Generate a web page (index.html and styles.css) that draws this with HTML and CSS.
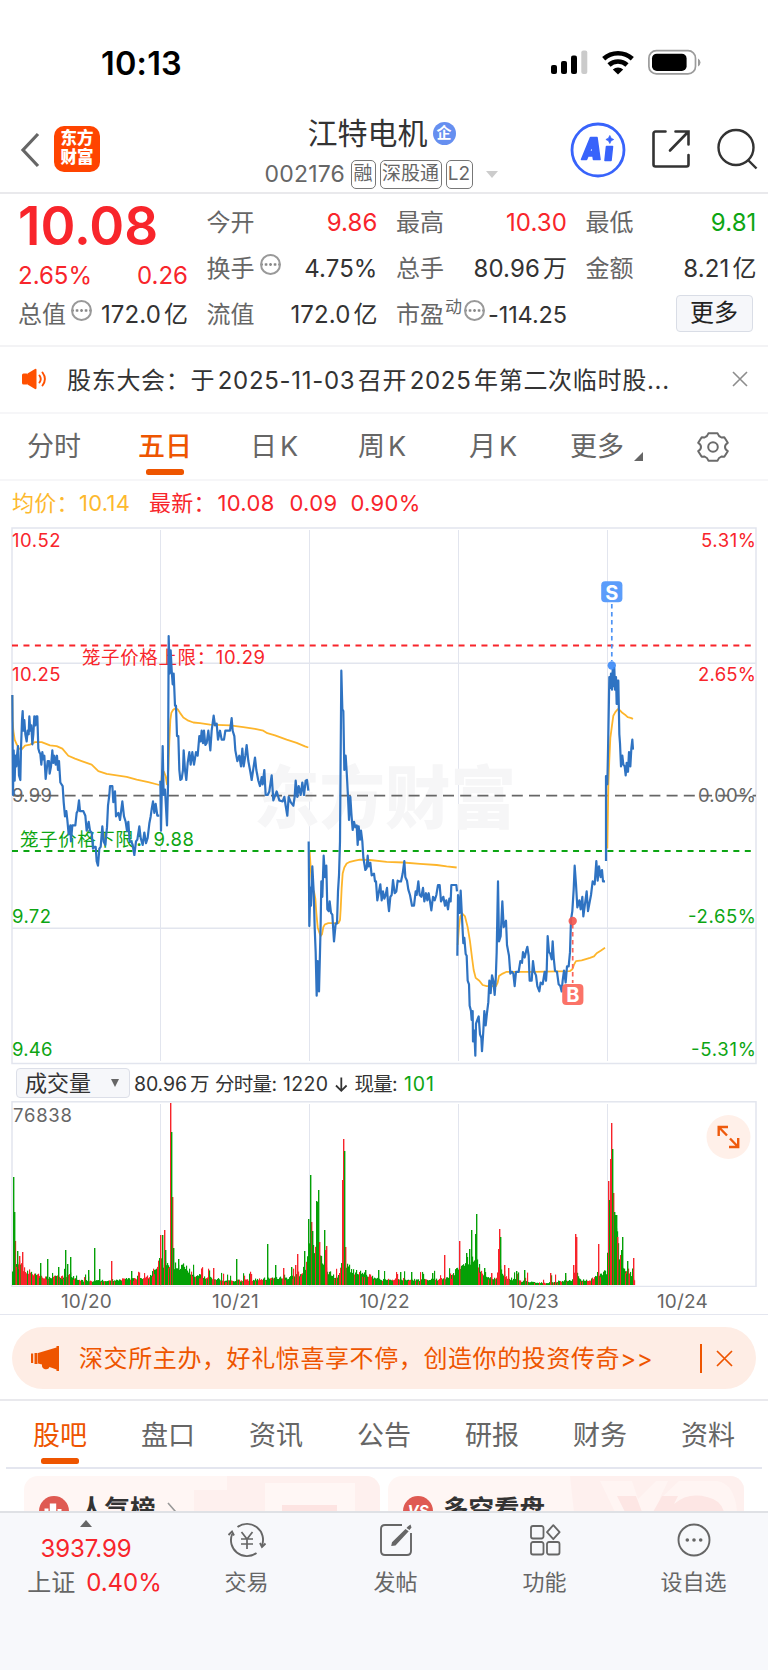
FILE: index.html
```html
<!DOCTYPE html>
<html lang="zh-CN">
<head>
<meta charset="utf-8">
<title>江特电机 002176</title>
<link rel="stylesheet" href="styles.css">
</head>
<body>
<div class="app">
  <div class="status">
    <span class="time">10:13</span>
    <svg class="status-icons" width="152" height="30" viewBox="550 48 152 30">
      <rect x="551" y="65" width="6" height="9" rx="2"/>
      <rect x="561" y="61" width="6" height="13" rx="2"/>
      <rect x="571" y="55.5" width="6" height="18.500" rx="2"/>
      <rect x="581.300" y="50.500" width="6" height="23.500" rx="2" fill="#cbcbcb"/>
      <g fill="none" stroke="#000" stroke-width="4.600">
        <path d="M603.700 58.800a21 21 0 0 1 28.600 0"/>
        <path d="M609 65a13.300 13.300 0 0 1 18 0"/>
      </g>
      <path d="M612.800 69.400a7.800 7.800 0 0 1 10.400 0L618 74.500z"/>
      <rect x="648.900" y="50.700" width="46.600" height="23.200" rx="7.500" fill="none" stroke="#9b9b9b" stroke-width="1.700"/>
      <rect x="652" y="53.700" width="34.600" height="17.300" rx="4.800"/>
      <path d="M698 58.500q2.500 1.500 2.500 4t-2.500 4z" fill="#9b9b9b"/>
    </svg>
  </div>

  <header class="header">
    <svg class="back" width="22" height="40" viewBox="0 0 22 40"><path d="M19 4 4 20l15 16" fill="none" stroke="#666" stroke-width="3.200"/></svg>
    <div class="logo"><span>东方</span><span>财富</span></div>
    <div class="heading">
      <div class="name">江特电机<span class="badge">企</span></div>
      <div class="sub"><span class="code">002176</span><span class="tag rong">融</span><span class="tag sgt">深股通</span><span class="tag l2">L2</span><i class="caret"></i></div>
    </div>
    <svg class="ai" width="56" height="56" viewBox="0 0 56 56">
      <circle cx="28" cy="28" r="26" fill="none" stroke="#3863fb" stroke-width="2.800"/>
      <g fill="#3863fb" fill-rule="evenodd" stroke="#3863fb" stroke-width="1.600" stroke-linejoin="round">
        <path d="M11.500 37.500 20.500 15.500H27L30 37.500H23.500L23 34H18L16.500 37.500zM19.500 29.500H22.700L22.300 23z"/>
        <path d="M36.500 24.500h6L41 38.500h-6z"/><path stroke-width=".8" d="m39.800 13.500 1.300 2.700 2.600 1.300-2.600 1.300-1.300 2.700-1.300-2.700-2.600-1.300 2.600-1.300z"/>
      </g>
    </svg>
    <svg class="share" width="40" height="40" viewBox="0 0 40 40"><g fill="none" stroke="#333" stroke-width="2.600" stroke-linecap="round"><path d="M14.500 2.500H4.500a2 2 0 0 0-2 2v31a2 2 0 0 0 2 2h31a2 2 0 0 0 2-2V26"/><path d="M24.500 2.500h13v13M37 3 19 21.500"/></g></svg>
    <svg class="search" width="42" height="42" viewBox="0 0 42 42"><g fill="none" stroke="#333" stroke-width="2.400"><circle cx="20" cy="19.500" r="17.500"/><path d="M32 32 40.500 40.500"/></g></svg>
  </header>

  <section class="quote">
    <div class="col first">
      <div class="price">10.08</div>
      <div class="row chg red"><span>2.65%</span><span>0.26</span></div>
      <div class="row"><span class="lab">总值<i class="more-dot"></i></span><span class="val">172.0<b>亿</b></span></div>
    </div>
    <div class="col">
      <div class="row"><span class="lab">今开</span><span class="val red">9.86</span></div>
      <div class="row"><span class="lab">换手<i class="more-dot"></i></span><span class="val">4.75%</span></div>
      <div class="row"><span class="lab">流值</span><span class="val">172.0<b>亿</b></span></div>
    </div>
    <div class="col">
      <div class="row"><span class="lab">最高</span><span class="val red">10.30</span></div>
      <div class="row"><span class="lab">总手</span><span class="val">80.96<b>万</b></span></div>
      <div class="row pe"><span class="lab">市盈<sup>动</sup><i class="more-dot"></i></span><span class="val">-114.25</span></div>
    </div>
    <div class="col">
      <div class="row"><span class="lab">最低</span><span class="val green">9.81</span></div>
      <div class="row"><span class="lab">金额</span><span class="val">8.21<b>亿</b></span></div>
      <div class="row end"><button class="more">更多</button></div>
    </div>
  </section>

  <div class="notice">
    <svg width="26" height="24" viewBox="0 0 26 24"><g fill="#ff5000"><rect x="0" y="6.500" width="6" height="11" rx="1.500"/><path d="M5.500 6.500 13 2q1.500-.6 1.500 1v18q0 1.600-1.500 1l-7.500-4.500z"/></g><g fill="none" stroke="#ff5000" stroke-width="1.900" stroke-linecap="round"><path d="M17.500 8.500q2.500 3.500 0 7M20.500 5.500q4.800 6.500 0 13"/></g></svg>
    <span class="notice-text">股东大会：于<em>2025-11-03</em>召开<em>2025</em>年第二次临时股...</span>
    <svg class="close" width="16" height="16" viewBox="0 0 16 16"><path d="m1 1 14 14M15 1 1 15" stroke="#8d8d8d" stroke-width="1.600"/></svg>
  </div>

  <nav class="periods">
    <span>分时</span><span class="on">五日</span><span>日<em>K</em></span><span>周<em>K</em></span><span>月<em>K</em></span><span class="more-tab">更多<i></i></span>
    <svg width="34" height="32" viewBox="-17 -16 34 32"><g fill="none" stroke="#6b6b6b" stroke-width="2"><circle r="4.800"/><path stroke-linejoin="round" d="M-4.500-13.700H4.500Q5.500-10.500 8.300-9.600L11.300-9.800 14.800-4.200Q12-2.500 12 0T14.800 4.200L11.300 9.800 8.300 9.600Q5.500 10.500 4.500 13.700H-4.500Q-5.500 10.500-8.300 9.600L-11.300 9.800-14.800 4.200Q-12 2.500-12 0T-14.800-4.200L-11.300-9.800-8.300-9.600Q-5.500-10.500-4.500-13.700z"/></g></svg>
  </nav>

  <div class="avg"><span class="gold">均价：10.14</span><span class="red latest">最新：</span><span class="red p">10.08</span><span class="red d">0.09</span><span class="red">0.90%</span></div>

  <svg class="chart" width="768" height="540" viewBox="0 526 768 540">
    <g class="grid">
      <path d="M12 663.200H756M12 928.200H756" stroke-width="1.600"/>
      <path d="M160.500 530V1061M309.500 530V1061M458.500 530V1061M607.500 530V1061"/>
      <rect x="12" y="528" width="744" height="535.500" />
    </g>
    <text class="watermark" x="254" y="823" textLength="262" lengthAdjust="spacingAndGlyphs">东方财富</text>
    <path d="M12 795.700H756" stroke="#666" stroke-width="1.800" stroke-dasharray="11 6.200" stroke-dashoffset="-1"/>
    <g class="dash"><path d="M12 645.500H752" stroke="#f8252b"/><path d="M12 851H752" stroke="#0da513"/></g>
    <g class="axis">
      <text class="up" x="12" y="546.600" textLength="48.500">10.52</text>
      <text class="up" x="12" y="681" textLength="48.500">10.25</text>
      <text class="flat" x="12" y="801.800" textLength="40">9.99</text>
      <text class="down" x="12" y="922.800" textLength="39">9.72</text>
      <text class="down" x="12" y="1056.300" textLength="40.500">9.46</text>
      <g text-anchor="end">
        <text class="up" x="756" y="546.600" textLength="55">5.31%</text>
        <text class="up" x="756" y="681" textLength="58">2.65%</text>
        <text class="flat" x="756" y="801.800" textLength="58">0.00%</text>
        <text class="down" x="756" y="922.800" textLength="68">-2.65%</text>
        <text class="down" x="756" y="1056.300" textLength="65">-5.31%</text>
      </g>
      <text class="up" x="82" y="664.300" textLength="183">笼子价格上限：10.29</text>
      <text class="down" x="20" y="846.200" textLength="174">笼子价格下限：9.88</text>
    </g>
    <g class="avg-line">
      <g transform="translate(0 520) scale(.333333 .357143)">
        <polyline points="37,490 38,560 40,590 44,615 50,628 57,640 65,642 75,632 90,629 105,622 125,622 150,631 170,633 187,640 205,660 225,668 245,675 260,680 275,685 295,703 320,711 350,715 380,719 410,727 445,734 478,742"/>
        <polyline points="483,740 487,700 492,705 497,718 501,740 505,700 508,620 511,560 514,540 519,532 526,527 533,530 540,540 550,553 565,562 580,567 600,569 630,573 690,575 730,580 765,585 790,590 802,597 825,603 860,615 890,624 915,634 925,637"/>
      </g>
      <g transform="translate(300 520) scale(.333333 .357143)">
        <polyline points="29,930 34,1000 38,1035 42,1040 46,1060 49,1100 53,1140 58,1155 62,1165 66,1160 70,1140 75,1132 85,1129 115,1129 120,1120 122,1090 125,1030 128,990 133,973 140,962 150,957 165,954 180,951 210,952 260,957 310,959 360,963 410,966 440,970 470,973"/>
        <polyline points="473,1190 477,1140 481,1110 487,1102 495,1110 503,1140 510,1180 516,1225 521,1260 527,1282 538,1290 548,1302 560,1305 588,1305 593,1295 597,1277 608,1270 620,1265 700,1265 810,1263 817,1258 822,1245 828,1235 845,1233 870,1226 882,1222 890,1213 902,1206 915,1198"/>
      </g>
      <g transform="translate(560 520) scale(.333333 .357143)">
        <polyline points="142,920 145,745 148,670 151,610 156,575 160,548 166,538 173,530 180,533 187,540 195,545 203,552 212,554 219,557"/>
      </g>
    </g>
    <g class="price-line">
      <g transform="translate(0 520) scale(.333333 .357143)">
        <polyline points="37,490 39,770 41,645 44,730 46,660 49,690 51,660 54,633 57,715 61,728 63,640 66,560 68,535 70,590 73,560 76,600 80,620 83,590 86,600 88,550 91,590 94,575 97,628 100,600 103,550 106,575 109,550 112,550 115,640 118,650 121,655 124,685 127,650 130,670 133,660 137,725 140,700 143,675 147,675 149,710 153,690 157,645 160,680 163,660 167,685 171,660 174,700 177,675 181,735 188,745 191,790 195,830 199,815 202,840 206,880 211,855 213,900 217,855 226,855 230,820 233,815 237,785 240,815 250,815 256,828 260,870 266,845 270,870 275,875 279,920 283,915 287,915 290,955 294,968 298,920 302,915 307,858 311,900 316,910 321,860 324,800 328,770 330,745 337,745 340,790 345,760 348,830 355,820 360,840 367,788 372,830 377,845 381,870 385,845 389,900 394,900 398,910 403,938 408,900 412,895 418,858 422,890 428,910 433,875 438,905 443,890 448,850 452,830 455,810 459,788 463,820 467,795 472,828 478,828"/>
        <polyline points="481,730 483,870 488,633 491,770 495,755 501,855 504,745 506,325 509,430 512,365 515,420 518,460 521,430 525,520 528,520 531,605 535,605 538,700 541,728 545,725 549,700 551,645 555,700 559,728 563,680 568,650 572,685 577,650 582,685 588,650 593,660 598,605 602,620 605,590 609,625 612,590 616,630 620,625 625,590 631,645 635,590 641,548 645,575 650,570 654,615 660,590 665,615 672,615 676,590 690,590 695,555 698,590 703,605 706,645 712,675 718,660 723,690 727,640 731,690 736,660 740,630 745,675 751,705 755,728 761,690 765,665 769,700 775,730 780,745 785,720 788,740 793,700 797,770 803,770 808,760 815,715 820,785 830,760 838,785 848,788 853,775 857,800 862,828 866,775 872,790 880,800 884,775 887,730 892,775 896,745 902,770 907,735 912,770 917,730 921,728 925,758"/>
      </g>
      <g transform="translate(300 520) scale(.333333 .357143)">
        <polyline points="26,900 28,1137 31,1030 33,1080 37,970 41,1040 44,1140 47,1210 50,1332 53,1235 57,1320 60,1210 62,1130 64,1012 67,1055 71,940 75,1000 79,968 82,1090 86,1095 89,1068 93,1100 97,1105 102,1180 107,1130 111,1130 114,1040 117,995 120,900 124,422 127,530 130,535 133,700 137,660 140,705 144,775 147,840 151,775 154,820 158,868 162,845 166,860 170,855 173,910 176,858 180,895 183,870 187,900 190,945 196,980 200,975 203,940 206,970 211,960 215,995 222,990 225,1012 228,1012 232,1065 236,1045 241,1020 245,1065 249,1040 253,1060 257,1050 261,1030 264,1070 267,1095 271,1055 275,1050 279,1008 284,1045 289,1040 293,1010 297,1012 303,1012 308,990 313,955 316,1000 321,1010 325,1035 330,1050 336,1080 342,1080 347,1040 350,1050 355,1012 359,1050 364,1055 369,1030 373,1068 378,1045 382,1065 386,1045 390,1068 394,1093 399,1055 404,1065 409,1050 414,1022 419,1022 423,1068 430,1055 435,1080 439,1065 444,1090 448,1060 452,1068 454,1022 469,1022 471,1040"/>
        <polyline points="472,1220 474,1050 479,1100 482,1038 485,1095 488,1150 490,1185 493,1170 497,1215 500,1220 503,1290 507,1300 509,1360 513,1375 515,1400 518,1375 519,1460 523,1430 526,1500 528,1410 532,1400 536,1390 540,1440 544,1450 546,1487 550,1430 553,1375 557,1415 561,1380 565,1350 568,1290 572,1325 576,1275 580,1290 584,1330 587,1290 590,1210 594,1012 597,1180 602,1165 607,1068 611,1140 618,1122 621,1190 627,1220 631,1270 636,1265 640,1270 644,1305 648,1265 656,1265 661,1235 666,1240 669,1210 674,1225 679,1205 682,1195 686,1220 689,1290 695,1290 699,1235 703,1265 708,1275 712,1305 718,1320 722,1295 728,1300 734,1265 738,1290 740,1265 743,1165 747,1210 751,1215 755,1230 758,1180 761,1225 765,1262 771,1265 776,1300 781,1305 785,1320 788,1290 792,1262 797,1295 801,1250 806,1250 810,1210 813,1120 817,1095 821,1035 824,968 828,1020 832,1085 838,1065 842,1090 847,1055 850,1110 855,1075 860,1040 864,1095 869,1070 873,1050 878,1012 884,1020 889,955 893,1010 897,970 902,1000 906,980 909,1012 915,1012"/>
      </g>
      <g transform="translate(560 520) scale(.333333 .357143)">
        <polyline points="138,955 138,717 142,740 145,600 148,440 151,470 153,430 156,475 158,420 161,465 163,415 165,475 168,440 170,515 173,515 173,450 175,450 178,600 180,625 183,690 187,660 190,685 194,690 197,715 200,680 204,705 207,650 211,690 214,640 217,615 219,643"/>
      </g>
    </g>
    <g class="mark">
      <path d="M611.800 604V661" stroke="#4e93f4" stroke-width="1.700" stroke-dasharray="4.500 3.500"/>
      <circle cx="611.800" cy="665.500" r="4.200" fill="#2f82f7" opacity=".85"/>
      <rect x="601.200" y="581.300" width="21.200" height="21" rx="4" fill="#5b9dfb"/>
      <text x="611.800" y="599.500">S</text>
      <path d="M572.700 924V983" stroke="#f9655c" stroke-width="1.700" stroke-dasharray="4.500 3.500"/>
      <circle cx="572.700" cy="921" r="4.200" fill="#f4554c" opacity=".9"/>
      <rect x="562.200" y="984" width="21.200" height="21" rx="4" fill="#fb7368"/>
      <text x="572.900" y="1002.200">B</text>
    </g>
  </svg>

  <div class="vol-head">
    <button class="picker">成交量<i></i></button>
    <svg width="310" height="38" viewBox="130 0 310 38"><g class="vol-text"><text x="134" y="25.500" textLength="53">80.96</text><text x="190" y="25.500" textLength="18">万</text><text x="215" y="25.500" textLength="62">分时量:</text><text x="283" y="25.500" textLength="45">1220</text><path d="M341.300 12.500V25M336 20.500l5.300 5.300 5.300-5.300" fill="none" stroke="#333" stroke-width="1.800"/><text x="354.500" y="25.500" textLength="43">现量:</text><text class="down" x="404" y="25.500" textLength="30">101</text></g></svg>
  </div>

  <div class="vol">
    <svg width="768" height="186" viewBox="0 1101 768 186">
      <g class="grid"><path d="M160.500 1104V1286M309.500 1104V1286M458.500 1104V1286M607.500 1104V1286"/><rect x="12" y="1101.800" width="744" height="184.700" stroke-width="1.800"/></g>
      <g id="bars"></g>
      <text class="vol-max" x="13" y="1122" textLength="59">76838</text>
      <circle cx="728.500" cy="1137" r="22" fill="#fff0e9"/>
      <g fill="none" stroke="#ee5a0d" stroke-width="2.400"><path d="M718.700 1136V1127H728M718.700 1127 727 1135.500M738.200 1138V1147H729M738.200 1147 730 1138.500"/></g>
    </svg>
    <div class="dates"><span>10/20</span><span>10/21</span><span>10/22</span><span>10/23</span><span>10/24</span></div>
  </div>

  <div class="promo-wrap"><div class="promo">
    <svg width="30" height="26" viewBox="0 0 30 26"><path fill="#ee5500" d="M1 8.500h2.200v9.500H1zM4.500 8h3v11h-3zM8 8 26.500 2.500V1H29v25h-2.500v-1.500L19.500 22q-1 3-4.500 2.200-3.500-.9-3-4.700L8 18.500z"/></svg>
    <span class="promo-text">深交所主办，好礼惊喜享不停，创造你的投资传奇&gt;&gt;</span>
    <i class="bar"></i>
    <svg class="x" width="17" height="17" viewBox="0 0 17 17"><path d="m1 1 15 15M16 1 1 16" stroke="#ee5500" stroke-width="1.700"/></svg>
  </div></div>

  <nav class="sections"><span class="on">股吧</span><span>盘口</span><span>资讯</span><span>公告</span><span>研报</span><span>财务</span><span>资料</span></nav>

  <div class="cards">
    <div class="card">
      <svg class="deco" width="356" height="36" viewBox="0 0 356 36"><path d="M170 14h33V0h153v36H170z" fill="#fef0ee"/><path d="M241 7h90v29h-90z" fill="#fff7f5"/><path d="M258 38V29h55v9z" fill="#fde4e2"/></svg>
      <svg class="ico" width="30" height="30" viewBox="0 0 30 30"><circle cx="15" cy="15" r="15" fill="#df5a52"/><path d="M5.500 30V12.500h4V30zM10.800 30V7.500h6.400V30zM18.500 30V13h4V30z" fill="#fff"/></svg>
      <b>人气榜</b><svg class="chev" width="10" height="18" viewBox="0 0 10 18"><path d="m1 1 7 8-7 8" fill="none" stroke="#999" stroke-width="1.600"/></svg>
    </div>
    <div class="card">
      <svg class="deco" width="357" height="36" viewBox="0 0 357 36"><path d="M182 0H357V36H186z" fill="#fef0ee"/><path d="M212 5h32l6 18 18-18h12l-9 19 20-19h38q18 3 20 31H227z" fill="#fff5f3"/><path d="M229 20h19l6 16h-17zM265 36l9-16h16l-4 8q14-12 33-7 14 3 17 15z" fill="#fde6e4"/></svg>
      <svg class="ico" width="30" height="30" viewBox="0 0 30 30"><circle cx="15" cy="15" r="15" fill="#df5a52"/><text x="15" y="20" text-anchor="middle" class="vs" textLength="21">VS</text></svg>
      <b>多空看盘</b>
    </div>
  </div>

  <footer class="tabbar">
    <div class="index"><i class="tri"></i><span class="red num">3937.99</span><span class="line"><span>上证</span><span class="red pct">0.40%</span></span></div>
    <div class="tab"><svg width="40" height="36" viewBox="-20 -18 40 36"><g fill="none" stroke="#666" stroke-width="1.900"><path d="M-9.500-13A16 16 0 0 1 14.800 6M9.500 13A16 16 0 0 1-14.800-6"/><path d="M18.500 3.500 15 7l-2-4M-18.500-5l3.500-3.500 2 4"/><path d="M-5.500-8 0-1 5.500-8M0-1V9M-6-1H6M-6 4H6" stroke-width="1.700"/></g></svg><span>交易</span></div>
    <div class="tab"><svg width="40" height="36" viewBox="-20 -18 40 36"><path d="M6-15H-11q-4 0-4 4V11q0 4 4 4H11q4 0 4-4V-7" fill="none" stroke="#666" stroke-width="1.900"/><path d="M11.800-13.500 14.500-15.500 15.500-12.500 13.500-10 10.500-12zM9.500-11l3.200 2.300L-.5 5.500-4.800 6-4 2.200z" fill="#666"/></svg><span>发帖</span></div>
    <div class="tab"><svg width="40" height="36" viewBox="-20 -18 40 36"><g fill="none" stroke="#666" stroke-width="1.800"><rect x="-14" y="-14" width="12.500" height="12.500" rx="2"/><rect x="-14" y="2" width="12.500" height="12.500" rx="2"/><rect x="2" y="2" width="12.500" height="12.500" rx="2"/><path d="m8.300-14.800 6.300 7-6.300 7-6.300-7z" stroke-linejoin="round"/></g></svg><span>功能</span></div>
    <div class="tab"><svg width="40" height="36" viewBox="-20 -18 40 36"><circle r="15.500" fill="none" stroke="#666" stroke-width="1.900"/><g fill="#666"><circle cx="-6.700" r="1.800"/><circle r="1.800"/><circle cx="6.700" r="1.800"/></g></svg><span>设自选</span></div>
  </footer>
</div>
<script src="volume.js"></script>
</body>
</html>
```

FILE: volume.js
```js
// Volume bars: a smooth envelope for quiet minutes, plus individually listed peaks.
const floor = [[12,18],[14,50],[16,26],[20,19],[25,15],[35,12],[45,8],[60,8],[70,10],[76,5],[90,4],[110,5],[125,6],[140,6],[150,9],[158,22],[168,24],[175,20],[185,18],[195,10],[215,7],[225,4],[250,5],[270,7],[285,7],[298,10],[305,18],[309,38],[312,34],[318,32],[325,18],[332,9],[338,9],[342,26],[346,20],[352,14],[365,11],[380,5],[400,6],[420,5],[440,6],[452,9],[458,18],[463,22],[470,26],[477,22],[483,9],[495,6],[500,18],[505,8],[520,4],[545,2],[560,4],[572,5],[575,20],[580,5],[590,5],[600,11],[606,14],[608,72],[612,66],[616,60],[618,36],[622,20],[628,14],[634,6],[635,2]];
const peaks = [[13,108,1],[14,73,1],[22,33,0],[17,34,1],[19,29,0],[40,22,1],[47,26,1],[65,35,1],[67,21,1],[70,28,1],[58,18,1],[94,37,1],[99,16,1],[88,15,1],[111,24,0],[131,14,1],[159,27,1],[160,50,0],[162,50,1],[164,55,0],[165,35,1],[170,182,0],[172,88,0],[171,153,1],[173,37,1],[178,26,1],[213,17,0],[236,26,1],[267,41,1],[275,20,1],[283,17,0],[291,18,1],[295,20,0],[297,31,0],[304,34,1],[308,66,1],[311,63,0],[310,110,1],[312,54,1],[316,84,1],[317,83,1],[318,95,1],[319,43,0],[324,55,1],[325,35,0],[326,39,0],[342,105,0],[343,146,0],[345,38,0],[344,134,1],[365,15,1],[378,15,1],[400,13,1],[411,13,1],[432,12,1],[444,30,0],[459,44,0],[466,32,1],[469,36,1],[471,55,1],[475,51,1],[476,71,1],[484,17,1],[491,12,0],[498,36,0],[499,56,0],[500,48,1],[504,20,0],[508,17,0],[516,14,1],[524,15,1],[550,12,0],[565,12,1],[573,20,0],[575,51,0],[576,48,0],[598,41,0],[608,104,0],[609,85,1],[610,126,0],[611,162,0],[613,92,0],[612,136,1],[614,73,1],[615,70,1],[616,70,1],[617,48,0],[620,30,0],[621,35,1],[622,48,1],[627,24,1],[633,27,0]];
// Stretches where selling volume dominates.
const solid = [[173, 190], [316, 323], [345, 352], [461, 477], [612, 619]];
let seed = 21;
const rnd = () => (seed = (seed * 16807) % 2147483647) / 2147483647;
const base = 1285;
const bars = document.getElementById('bars');
const add = (x, h, g, w = 1.15) => {
  const r = document.createElementNS('http://www.w3.org/2000/svg', 'rect');
  r.setAttribute('x', x); r.setAttribute('y', base - h);
  r.setAttribute('width', w); r.setAttribute('height', h);
  r.setAttribute('fill', g ? '#04a006' : '#f7232a');
  bars.appendChild(r);
};
let g = true;
for (let x = 12; x < 635; x++) {
  let i = 0;
  while (floor[i + 1][0] < x) i++;
  const [a, ha] = floor[i], [b, hb] = floor[i + 1];
  const h = ha + (hb - ha) * (x - a) / (b - a);
  const under = h * (0.75 + rnd() * 0.45);
  if (rnd() < 0.6) g = rnd() < 0.68;
  const full = solid.some(([s, e]) => x >= s && x <= e);
  add(x, Math.max(1.5, under), full || g);
  if (!full && rnd() < 0.12) add(x, Math.max(1, h * 0.7), !g);
  if (h < 12 && rnd() < 0.11) add(x, h + 3 + rnd() * 6, rnd() < 0.6);
}
peaks.forEach(([x, h, c]) => add(x, h, c, 1.4));
```

FILE: styles.css
```css
* { box-sizing: border-box; }
body { margin: 0; background: #fff; color: #333; font-family: Inter, "Noto Sans CJK SC", sans-serif; }
.app { width: 768px; height: 1670px; overflow: hidden; display: flex; flex-direction: column; }
.app > * { flex: none; }
svg { display: block; }
em, i { font-style: normal; }
.red { color: #f8252b; }
.green { color: #0da513; }

.status { height: 108px; padding: 48px 66px 0 101px; display: flex; justify-content: space-between; color: #000; }
.time { font-size: 32.5px; font-weight: 600; line-height: 31px; letter-spacing: 0.2px; }

.header { height: 86px; border-bottom: 2px solid #e9e9ec; display: flex; align-items: flex-start; }
.back { margin: 22px 0 0 19px; }
.logo { width: 46px; height: 46px; margin: 18px 0 0 13px; border-radius: 10px; background: #ff4400; color: #fff; font-weight: 900; font-size: 16.5px; line-height: 19px; padding-top: 3px; text-align: center; display: flex; flex-direction: column; }
.heading { width: 260px; margin-left: 145px; display: flex; flex-direction: column; align-items: center; }
.name { margin: 7px 0 0 13px; height: 36px; line-height: 36px; font-size: 30px; display: flex; align-items: center; gap: 5px; white-space: nowrap; }
.badge { width: 23px; height: 23px; border-radius: 50%; background: #668ff0; color: #fff; font-size: 15px; line-height: 22px; font-weight: 700; text-align: center; }
.sub { display: flex; align-items: center; height: 30px; margin-top: 8px; color: #666; white-space: nowrap; }
.code { font-size: 23px; letter-spacing: 0.2px; width: 86px; margin-left: 12px; }
.tag { height: 29px; border: 1.5px solid #777; border-radius: 5px; font-size: 19px; line-height: 25px; text-align: center; margin-right: 4px; }
.rong { width: 25px; }
.sgt { width: 62px; }
.l2 { width: 27px; }
.caret { border: 6.5px solid transparent; border-top: 7px solid #ccc; border-bottom: 0; margin-left: 9px; }
.ai { margin: 14px 0 0 64.5px; }
.share { margin: 21px 0 0 25px; }
.search { margin: 20px 0 0 25px; }

.quote { height: 153px; border-bottom: 2px solid #f3f3f5; padding: 6px 12px 0 18px; display: grid; grid-template-columns: 170px 171px 171px 171px; gap: 18.5px; }
.col { display: flex; flex-direction: column; gap: 1px; }
.col.first { gap: 0; }
.row { height: 45px; display: flex; justify-content: space-between; align-items: center; font-size: 24px; line-height: 45px; white-space: nowrap; }
.lab { color: #666; display: flex; align-items: center; }
.val { display: flex; letter-spacing: 0.1px; }
.val b { font-weight: 400; margin-left: 3px; }
.price { height: 54px; font-size: 53px; font-weight: 600; line-height: 52px; color: #f8252b; letter-spacing: 0; }
.row.chg { height: 38px; line-height: 43px; align-items: flex-start; }
.more-dot { width: 21px; height: 21px; border: 2px solid #999; border-radius: 50%; margin: -9px 0 0 5px; background: radial-gradient(circle, #888 1.1px, transparent 1.6px) 0 0 / 4.500px 17px, none; background-position: 1.800px 0; background-repeat: repeat-x; }
.pe .more-dot { margin-left: 2px; }
.pe sup { font-size: 17px; line-height: 20px; margin-top: -16px; margin-left: 1px; }
.pe .val { font-size: 23.500px; letter-spacing: -0.1px; margin-left: -8px; }
.row.end { justify-content: flex-end; padding-right: 4px; }
.more { width: 77px; height: 37px; margin-top: -3px; padding: 0; border: 1.5px solid #d9dde6; border-radius: 4px; background: #f6f7fa; color: #222; font: inherit; line-height: 32px; }

.notice { height: 67px; border-bottom: 2px solid #f6f6f8; display: flex; align-items: center; padding: 0 20px 2px 22px; }
.notice-text { margin: -1px 0 0 19px; width: 665px; font-size: 24px; letter-spacing: 0.7px; white-space: nowrap; }
.notice-text em { margin: 0 2.5px; }

.periods { height: 67px; border-bottom: 2px solid #f6f6f8; display: flex; align-items: flex-start; font-size: 27px; line-height: 65px; color: #666; padding-left: 27px; white-space: nowrap; }
.periods em { margin-left: 3px; }
.periods span { width: 111px; height: 60.5px; }
.periods span:nth-child(2) { width: 112px; }
.periods span:nth-child(3) { width: 108px; }
.periods span:nth-child(4) { width: 111px; }
.periods span:nth-child(5) { width: 101px; }
.periods .on { color: #ee5500; font-weight: 500; position: relative; }
.on::after { content: ""; position: absolute; left: 8px; bottom: 0; width: 38px; height: 6px; border-radius: 2.5px; background: #ee5500; }
.more-tab { display: flex; align-items: flex-start; gap: 10px; }
.more-tab i { margin-top: 38px; border-left: 9px solid transparent; border-bottom: 9px solid #666; }
.periods svg { margin: 17px 0 0 15px; }

.avg { height: 45px; padding-left: 12px; display: flex; align-items: center; font-size: 22px; line-height: 30px; padding-bottom: 1px; letter-spacing: 0.3px; }
.gold { color: #fdb92e; width: 137px; }
.latest { width: 68.5px; }
.p { width: 72px; }
.d { width: 61px; }

.chart text, .vol text, .vol-text text { font-family: Inter, "Noto Sans CJK SC", sans-serif; }
.grid path, .grid rect { fill: none; stroke: #e2e5ee; }
.grid rect { stroke-width: 1.5px; }
.axis text { font-size: 18.500px; }
.up { fill: #f8252b; }
.down { fill: #0da513; }
.flat { fill: #666; }
.chart .watermark { font-size: 68px; font-weight: 900; fill: #f6f6f7; }
.dash path { stroke-width: 2px; stroke-dasharray: 6 5.450; }
.avg-line polyline, .price-line polyline { fill: none; vector-effect: non-scaling-stroke; stroke-linejoin: round; }
.avg-line polyline { stroke: #fdb52b; stroke-width: 1.8px; }
.price-line polyline { stroke: #2f73c2; stroke-width: 2.2px; }
.mark text { font-size: 20px; font-weight: 700; fill: #fff; text-anchor: middle; }

.vol-head { height: 35px; display: flex; padding-left: 16px; }
.picker { width: 114px; height: 30px; margin: 1.5px 0 0; padding: 0 0 0 8px; border: 1.5px solid #dcdfe8; border-radius: 4px; background: #f6f7fa; color: #333; font: 22px/26px Inter, "Noto Sans CJK SC", sans-serif; display: flex; align-items: center; gap: 20px; }
.picker i { border: 4.5px solid transparent; border-top: 8px solid #666; border-bottom: 0; }
.vol-head svg { margin-top: -1px; }
.vol-text text { font-size: 19.500px; fill: #333; }
.vol-text .down { fill: #0da513; }
.vol-max { font-size: 18.500px; fill: #666; }
.vol { height: 214px; border-bottom: 1.5px solid #e4e6ef; }
.dates { display: flex; padding: 1px 0 0 12px; font-size: 19px; line-height: 27px; letter-spacing: 0.2px; color: #666; }
.dates span { width: 149px; text-align: center; }

.promo-wrap { height: 86px; border-bottom: 2px solid #e9e9ed; padding: 12px 12px 0; }
.promo { height: 62px; border-radius: 31px; background: #feede5; display: flex; align-items: center; padding-left: 18px; color: #ee5500; }
.promo-text { margin: -4px 0 0 19px; width: 621px; font-size: 24px; letter-spacing: 0.6px; white-space: nowrap; }
.bar { width: 1.5px; height: 29px; background: #ee5500; }
.promo .x { margin-left: 14px; }

.sections { height: 68px; margin: 0 6px; border-bottom: 2px solid #e4e6ef; display: flex; font-size: 27px; line-height: 69px; color: #666; }
.sections span { width: 108px; text-align: center; height: 63px; flex: none; }
.sections .on { color: #ee5500; position: relative; }
.sections .on::after { left: 35px; }

.cards { height: 42px; padding: 7px 23px 0 24px; display: flex; gap: 8px; overflow: hidden; }
.card { width: 356px; height: 80px; border-radius: 14px; background: #fff6f4; padding: 20px 0 0 15px; display: flex; align-items: flex-start; overflow: hidden; position: relative; }
.deco { position: absolute; left: 0; top: 0; }
.card .ico, .card b, .card .chev { position: relative; }
.card b { margin: -5.5px 0 0 10px; font-size: 25.5px; line-height: 36px; }
.chev { margin: 6px 0 0 11px; }
.vs { font: italic 700 15px Inter, sans-serif; fill: #fff; }

.tabbar { flex: 1 0 auto !important; border-top: 2px solid #dfe1e5; background: #f7f8fb; display: flex; color: #666; }
.index { width: 172px; display: flex; flex-direction: column; align-items: center; }
.tri { border: 6.5px solid transparent; border-bottom: 7.5px solid #666; border-top: 0; margin-top: 7px; }
.num { font-size: 24px; line-height: 30px; margin-top: 7px; letter-spacing: -0.1px; }
.line { display: flex; gap: 11px; padding-left: 17px; font-size: 24px; line-height: 36px; margin-top: 1px; white-space: nowrap; }
.tab { width: 149px; display: flex; flex-direction: column; align-items: center; padding-top: 9px; font-size: 22px; line-height: 30px; }
.tab span { margin-top: 9px; }
```
